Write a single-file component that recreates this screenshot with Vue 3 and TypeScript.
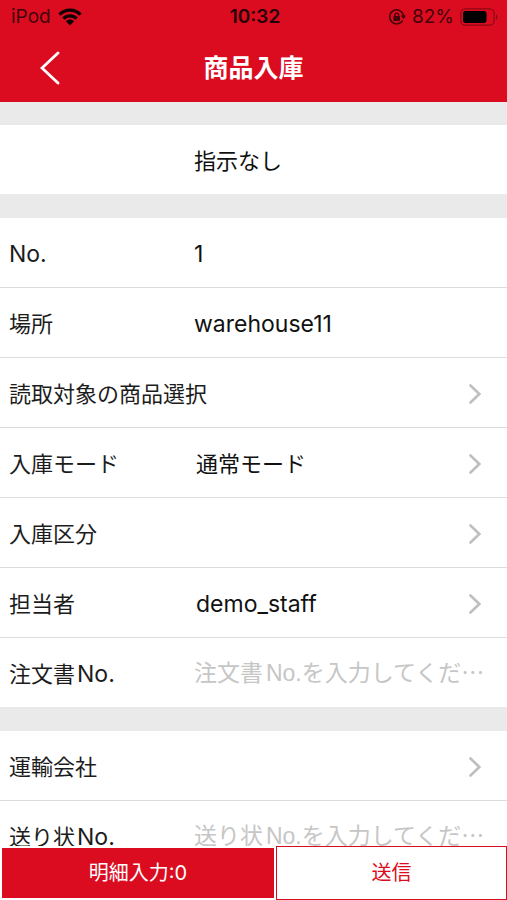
<script setup lang="ts">
import { ref } from 'vue'

type RowKind = 'text' | 'link' | 'input'

interface Row {
  id: string
  kind: RowKind
  label: string
  suffix?: string
  value?: string
  placeholder?: string
}

const groups: Row[][] = [
  [
    { id: 'no', kind: 'text', label: '', suffix: 'No.', value: '1' },
    { id: 'place', kind: 'text', label: '場所', value: 'warehouse11' },
    { id: 'target', kind: 'link', label: '読取対象の商品選択' },
    { id: 'mode', kind: 'link', label: '入庫モード', value: '通常モード' },
    { id: 'division', kind: 'link', label: '入庫区分' },
    { id: 'staff', kind: 'link', label: '担当者', value: 'demo_staff' },
    { id: 'order', kind: 'input', label: '注文書', suffix: 'No.', placeholder: '注文書No.を入力してくだ⋯' },
  ],
  [
    { id: 'carrier', kind: 'link', label: '運輸会社' },
    { id: 'invoice', kind: 'input', label: '送り状', suffix: 'No.', placeholder: '送り状No.を入力してくだ⋯' },
  ],
]

const inputs = ref<Record<string, string>>({ order: '', invoice: '' })
const detailCount = ref(0)

const isLatin = (text: string): boolean => /^[\x20-\x7e]+$/.test(text)
</script>

<template>
  <div class="screen">
    <header class="header">
      <div class="status">
        <div class="status-left">
          <span>iPod</span>
          <svg class="wifi" viewBox="0 0 24 18" aria-hidden="true">
            <g fill="none" stroke="currentColor" stroke-width="3.2">
              <path d="M1.5 6.6C7.4 .7 16.6 .7 22.5 6.6" />
              <path d="M5.4 10.7c3.7-3.7 9.5-3.7 13.2 0" />
            </g>
            <path d="M7.9 13.2c2.3-2.2 5.9-2.2 8.2 0L12 17.4z" fill="currentColor" />
          </svg>
        </div>
        <span class="clock">10:32</span>
        <div class="status-right">
          <svg class="lock" viewBox="0 0 18 18" aria-hidden="true">
            <path d="M14.6 12.6A7 7 0 1 1 15.6 8" fill="none" stroke="currentColor" stroke-width="1.5" />
            <path d="M13 7.6h5l-2.5 3.6z" fill="currentColor" />
            <rect x="5.4" y="8" width="6.6" height="5" rx="1" fill="currentColor" />
            <path d="M6.8 8.4V7a1.9 1.9 0 0 1 3.8 0v1.4" fill="none" stroke="currentColor" stroke-width="1.3" />
          </svg>
          <span>82%</span>
          <svg class="battery" viewBox="0 0 39 18" aria-hidden="true">
            <rect x=".8" y=".8" width="33.4" height="16.4" rx="4.5" fill="none" stroke="currentColor" stroke-opacity=".5" stroke-width="1.3" />
            <rect x="3" y="3" width="23.5" height="12" rx="2.4" fill="#000" />
            <path d="M36 6.2c2 .8 2 4.8 0 5.6z" fill="currentColor" fill-opacity=".5" />
          </svg>
        </div>
      </div>
      <div class="navbar">
        <button class="back" type="button" aria-label="戻る">
          <svg viewBox="0 0 20 34" aria-hidden="true">
            <path d="M18 2 2 17l16 15" fill="none" stroke="currentColor" stroke-width="2.8" stroke-linecap="round" stroke-linejoin="miter" />
          </svg>
        </button>
        <h1>商品入庫</h1>
      </div>
    </header>

    <main class="content">
      <section class="group">
        <div class="row">
          <span class="value solo">指示なし</span>
        </div>
      </section>

      <section v-for="(rows, index) in groups" :key="index" class="group">
        <template v-for="row in rows" :key="row.id">
          <button v-if="row.kind === 'link'" class="row link" type="button">
            <span class="label" :class="{ wide: !row.value }">{{ row.label }}</span>
            <span v-if="row.value" class="value" :class="{ latin: isLatin(row.value) }">{{ row.value }}</span>
            <svg class="chevron" viewBox="0 0 12 20" aria-hidden="true">
              <path d="M1.5 1.5 10.3 10l-8.8 8.5" fill="none" stroke="currentColor" stroke-width="2.6" stroke-linecap="round" />
            </svg>
          </button>
          <div v-else-if="row.kind === 'input'" class="row">
            <label class="label" :for="row.id">{{ row.label }}<span class="latin suffix">{{ row.suffix }}</span></label>
            <input :id="row.id" v-model="inputs[row.id]" class="field" type="text" :placeholder="row.placeholder" />
          </div>
          <div v-else class="row">
            <span class="label">{{ row.label }}<span v-if="row.suffix" class="latin">{{ row.suffix }}</span></span>
            <span class="value latin">{{ row.value }}</span>
          </div>
        </template>
      </section>
    </main>

    <footer class="actions">
      <button class="detail" type="button">明細入力:{{ detailCount }}</button>
      <button class="send" type="button">送信</button>
    </footer>
  </div>
</template>

<style>
body {
  margin: 0;
}
</style>

<style scoped>
.screen {
  display: flex;
  flex-direction: column;
  height: 100vh;
  overflow: hidden;
  background: #fff;
  color: #1c1c1c;
  font-family: Inter, "Noto Sans CJK JP", sans-serif;
  font-size: 22px;
  line-height: 28px;
}

button,
input {
  margin: 0;
  padding: 0;
  border: 0;
  border-radius: 0;
  background: none;
  color: inherit;
  font: inherit;
}

.header {
  flex: none;
  display: flex;
  flex-direction: column;
  height: 102px;
  background: #dc0c20;
}

.status {
  display: grid;
  grid-template-columns: 1fr auto 1fr;
  align-items: center;
  height: 34px;
  padding: 0 8px 0 11px;
  color: #41040a;
  font-size: 19px;
  line-height: 24px;
}

.status-left,
.status-right {
  display: flex;
  align-items: center;
  gap: 7px;
}

.status-right {
  justify-content: flex-end;
  gap: 6px;
}

.wifi {
  width: 24px;
  height: 18px;
  color: #100002;
}

.clock {
  color: #240206;
  font-weight: 600;
}

.lock {
  width: 18px;
  height: 18px;
}

.battery {
  width: 39px;
  height: 18px;
}

.navbar {
  flex: 1;
  display: grid;
  grid-template-columns: 1fr auto 1fr;
  align-items: center;
  color: #fff;
}

.back {
  justify-self: start;
  display: flex;
  padding: 0 20px 0 40px;
}

.back svg {
  width: 20px;
  height: 34px;
}

h1 {
  margin: 0;
  font-size: 25px;
  font-weight: 700;
  line-height: 36px;
}

.content {
  flex: 1;
  min-height: 0;
  display: flex;
  flex-direction: column;
  gap: 24px;
  padding-top: 23px;
  overflow-y: auto;
  scrollbar-width: none;
  background: #eaeaea;
}

.group {
  flex: none;
  display: flex;
  flex-direction: column;
  background: #fff;
}

.row {
  display: flex;
  align-items: center;
  width: 100%;
  height: 69px;
  padding: 2px 12px 0 9px;
  box-sizing: border-box;
  text-align: left;
}

.row + .row {
  height: 70px;
  border-top: 1px solid #dcdcdc;
}

.link {
  padding-right: 26px;
  cursor: pointer;
}

.label {
  flex: none;
  width: 185px;
  white-space: nowrap;
}

.label.wide {
  flex: 1;
}

.value {
  flex: 1;
  min-width: 0;
  color: #111;
}

.link .value {
  padding-left: 2px;
}

.latin {
  font-size: 23px;
}

.suffix {
  margin-left: 2px;
}

.solo {
  margin-left: 185px;
}

.field {
  flex: 1;
  min-width: 0;
  height: 40px;
  font-family: "Liberation Sans", "Noto Sans CJK JP", sans-serif;
  font-size: 23px;
  text-autospace: normal;
  outline: none;
}

.field::placeholder {
  color: #c6c6c6;
  opacity: 1;
}

.chevron {
  flex: none;
  width: 12px;
  height: 20px;
  color: #bfbfbf;
}

.actions {
  flex: none;
  display: grid;
  grid-template-columns: 272fr 231fr;
  gap: 2px;
  height: 54px;
  padding-left: 2px;
  background: #fff;
  font-size: 20px;
}

.detail {
  margin: 2px 0;
  background: #dc0c20;
  color: #fff;
  cursor: pointer;
}

.send {
  border: 1px solid #dc0c20;
  color: #dc0c20;
  cursor: pointer;
}
</style>
